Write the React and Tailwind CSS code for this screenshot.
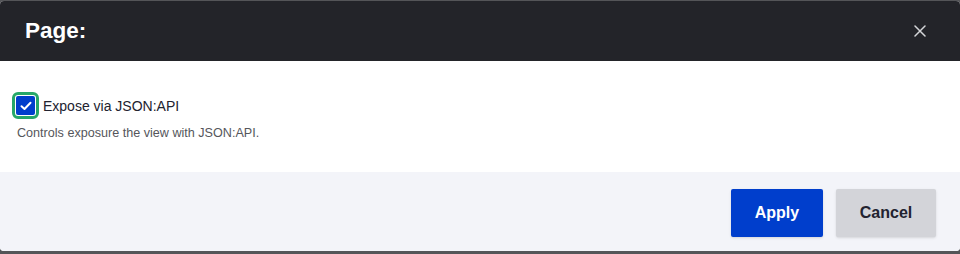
import React from "react";

export default function App() {
  return (
    <div className="w-[960px] h-[254px] bg-[#545558] pt-px" style={{ fontFamily: '"Liberation Sans", Arial, sans-serif' }}>
      <div className="h-[250px] rounded-[4px] overflow-hidden flex flex-col bg-white">
        <div className="h-[60px] bg-[#232429] flex items-center justify-between pl-[25px] pr-[34px]">
          <h1 className="text-white text-[22.5px] font-bold leading-none">Page:</h1>
          <button className="text-[#d4d5d8]">
            <svg width="12" height="12" viewBox="0 0 12 12" fill="none" stroke="currentColor" strokeWidth="1.5" strokeLinecap="round">
              <path d="M1 1L11 11M11 1L1 11" />
            </svg>
          </button>
        </div>
        <div className="h-[111px] bg-white pt-[31px] pl-[12px]">
          <label className="flex items-center gap-[4px]">
            <span className="w-[27px] h-[27px] rounded-[6px] border-[3px] border-[#26a769] bg-white flex items-center justify-center">
              <span className="w-[19px] h-[19px] rounded-[2px] bg-[#003ecc] flex items-center justify-center">
                <svg width="12" height="10" viewBox="0 0 12 10" fill="none" stroke="white" strokeWidth="2" strokeLinecap="round" strokeLinejoin="round">
                  <path d="M1.5 5.2L4.5 8L10.5 1.8" />
                </svg>
              </span>
            </span>
            <span className="text-[14px] text-[#222330] pt-px">Expose via JSON:API</span>
          </label>
          <p className="text-[12.6px] text-[#55565b] mt-[5px] pl-[5px]">Controls exposure the view with JSON:API.</p>
        </div>
        <div className="flex-1 bg-[#f3f4f9] flex items-start justify-end gap-[13px] pt-[17px] pr-[24px]">
          <button className="w-[92px] h-[48px] rounded-[2px] bg-[#003ecc] text-white font-bold text-[16px] shadow-sm">Apply</button>
          <button className="w-[100px] h-[48px] rounded-[2px] bg-[#d3d4d9] text-[#222330] font-bold text-[16px] shadow-sm">Cancel</button>
        </div>
      </div>
    </div>
  );
}
